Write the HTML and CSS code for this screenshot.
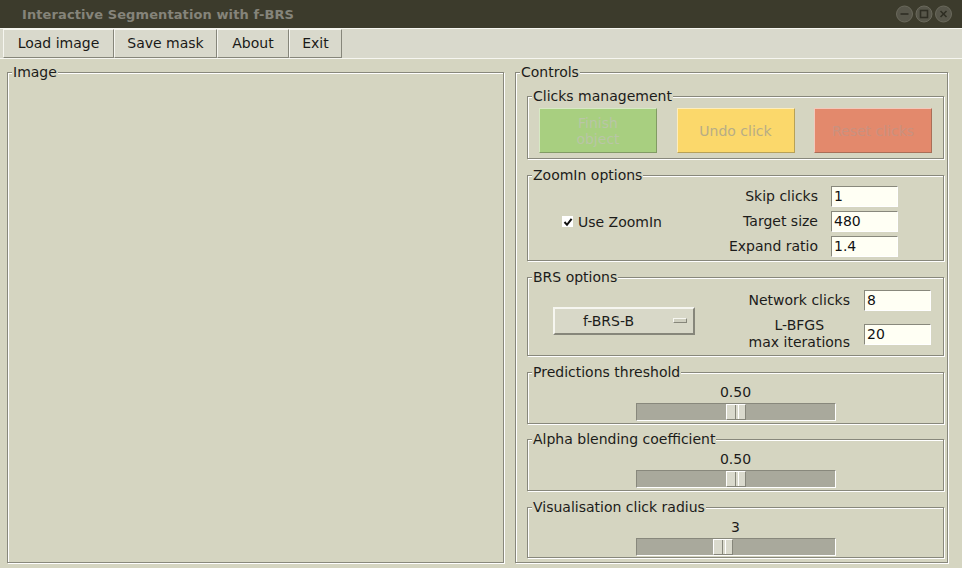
FILE: index.html
```html
<!DOCTYPE html>
<html>
<head>
<meta charset="utf-8">
<title>Interactive Segmentation with f-BRS</title>
<link rel="stylesheet" href="styles.css">
</head>
<body>
<div class="window">
  <div class="titlebar">
    <span class="title">Interactive Segmentation with f-BRS</span>
    <svg class="wm-buttons" width="57" height="18" viewBox="0 0 57 18">
      <g fill="#57564a" stroke="#6a695c" stroke-width="1">
        <circle cx="8.5" cy="9" r="8"/>
        <circle cx="28" cy="9" r="8"/>
        <circle cx="47.5" cy="9" r="8"/>
      </g>
      <g stroke="#2f2e24" stroke-width="1.6" fill="none">
        <line x1="4.5" y1="9" x2="12.5" y2="9"/>
        <rect x="24.5" y="5.5" width="7" height="7"/>
        <line x1="44.5" y1="6" x2="50.5" y2="12"/>
        <line x1="50.5" y1="6" x2="44.5" y2="12"/>
      </g>
    </svg>
  </div>
  <div class="menubar">
    <div class="menu-btn w-load">Load image</div>
    <div class="menu-btn w-save">Save mask</div>
    <div class="menu-btn w-about">About</div>
    <div class="menu-btn w-exit">Exit</div>
  </div>
  <div class="main">
    <div class="group image-group">
      <span class="group-title">Image</span>
    </div>
    <div class="group controls-group">
      <span class="group-title controls-title">Controls</span>

      <div class="group clicks">
        <span class="group-title">Clicks management</span>
        <div class="clicks-row">
          <div class="cbtn cbtn-green">Finish<br>object</div>
          <div class="cbtn cbtn-yellow">Undo click</div>
          <div class="cbtn cbtn-red">Reset clicks</div>
        </div>
      </div>

      <div class="group zoomin">
        <span class="group-title">ZoomIn options</span>
        <div class="zoomin-body">
          <label class="check">
            <span class="checkbox">
              <svg width="10" height="10" viewBox="0 0 10 10"><path d="M1.5 5 L4 7.8 L8.6 1.8" stroke="#111" stroke-width="2" fill="none"/></svg>
            </span>
            Use ZoomIn
          </label>
          <div class="form-grid zoom-grid">
            <span class="lbl">Skip clicks</span><span class="entry">1</span>
            <span class="lbl">Target size</span><span class="entry">480</span>
            <span class="lbl">Expand ratio</span><span class="entry">1.4</span>
          </div>
        </div>
      </div>

      <div class="group brs">
        <span class="group-title">BRS options</span>
        <div class="brs-body">
          <div class="menubutton"><span>f-BRS-B</span><span class="indicator"></span></div>
          <div class="form-grid brs-grid">
            <span class="lbl">Network clicks</span><span class="entry">8</span>
            <span class="lbl lbl-center">L-BFGS<br>max iterations</span><span class="entry">20</span>
          </div>
        </div>
      </div>

      <div class="group slider-group">
        <span class="group-title">Predictions threshold</span>
        <div class="slider-value">0.50</div>
        <div class="trough"><div class="handle" style="left:89px"></div></div>
      </div>

      <div class="group slider-group alpha">
        <span class="group-title">Alpha blending coefficient</span>
        <div class="slider-value">0.50</div>
        <div class="trough"><div class="handle" style="left:89px"></div></div>
      </div>

      <div class="group slider-group radius">
        <span class="group-title">Visualisation click radius</span>
        <div class="slider-value">3</div>
        <div class="trough"><div class="handle" style="left:76px"></div></div>
      </div>
    </div>
  </div>
</div>
</body>
</html>
```

FILE: styles.css
```css
* { box-sizing: border-box; }

html, body {
  margin: 0;
  padding: 0;
}

body {
  font-family: "DejaVu Sans", "Liberation Sans", sans-serif;
  font-size: 14px;
  color: #1c1c1a;
  background: #d5d5c1;
}

.window {
  width: 962px;
  height: 568px;
  display: flex;
  flex-direction: column;
  overflow: hidden;
}

/* title bar */
.titlebar {
  height: 28px;
  flex: none;
  background: #3c3b2c;
  display: flex;
  align-items: center;
  padding: 0 9px 0 22px;
}

.title {
  flex: 1;
  color: #85847a;
  font-size: 13px;
  font-weight: bold;
  letter-spacing: 0.1px;
}

.wm-buttons { display: block; }

/* menu bar */
.menubar {
  height: 31px;
  flex: none;
  display: flex;
  padding-left: 3px;
  background: #d9d9cc;
  border-top: 1px solid #f6f6f0;
  border-bottom: 1px solid #f6f6f0;
}

.menu-btn {
  text-align: center;
  line-height: 27px;
  border: 1px solid;
  border-color: #f6f6f0 #86867a #86867a #f6f6f0;
  color: #1a1a18;
}

.w-load { width: 111px; }
.w-save { width: 103px; }
.w-about { width: 72px; }
.w-exit { width: 53px; }

/* main area */
.main {
  flex: 1;
  display: flex;
  gap: 11px;
  padding: 13px 0 6px 7px;
}

.group {
  border: 1px solid #88887c;
  box-shadow: inset 1px 1px 0 #ffffff, 1px 1px 0 #ffffff;
}

.group-title {
  display: block;
  width: max-content;
  height: 17px;
  line-height: 17px;
  margin: -9px 0 0 4px;
  padding: 0 1px;
  background: #d5d5c1;
  color: #1c1c1a;
}

.image-group {
  width: 497px;
  height: 491px;
}

.controls-group {
  width: 433px;
  height: 491px;
  padding: 0 3px 0 11px;
  display: flex;
  flex-direction: column;
}

.controls-title { margin-left: -7px; }

/* clicks management */
.clicks {
  height: 63px;
  margin-top: 15px;
}

.clicks-row {
  display: flex;
  justify-content: space-between;
  padding: 3px 11px 0 11px;
}

.cbtn {
  width: 118px;
  height: 45px;
  display: flex;
  align-items: center;
  justify-content: center;
  text-align: center;
  line-height: 16px;
  border: 1px solid;
  border-color: rgba(255,255,255,0.55) rgba(60,60,50,0.35) rgba(60,60,50,0.35) rgba(255,255,255,0.55);
}

.cbtn-green { background: #a8cf80; color: #b9c6a6; }
.cbtn-yellow { background: #fbd86b; color: #b7ad86; }
.cbtn-red { background: #e3896c; color: #c9917f; }

/* zoomin */
.zoomin {
  height: 86px;
  margin-top: 16px;
}

.zoomin-body {
  display: flex;
  align-items: center;
  padding: 2px 45px 0 34px;
}

.check {
  display: flex;
  align-items: center;
  gap: 5px;
}

.checkbox {
  width: 11px;
  height: 11px;
  background: #ffffff;
  display: flex;
  align-items: center;
  justify-content: center;
}

.checkbox svg { display: block; }

.form-grid {
  margin-left: auto;
  display: grid;
  grid-template-columns: auto 67px;
  column-gap: 13px;
  align-items: center;
}

.zoom-grid { row-gap: 4px; }

.lbl {
  text-align: right;
  justify-self: end;
  line-height: 21px;
}

.lbl-center {
  text-align: center;
  line-height: 17px;
}

.entry {
  height: 21px;
  width: 67px;
  background: #fffff4;
  border: 1px solid;
  border-color: #88887c #ffffff #ffffff #88887c;
  padding-left: 2px;
  line-height: 19px;
  color: #111;
}

/* brs */
.brs {
  height: 79px;
  margin-top: 16px;
}

.brs-body {
  display: flex;
  align-items: center;
  padding: 4px 12px 0 25px;
}

.brs-grid {
  row-gap: 6px;
  column-gap: 14px;
}

.menubutton {
  width: 142px;
  height: 28px;
  display: flex;
  align-items: center;
  padding: 0 6px 0 28px;
  border: 2px solid;
  border-color: #f6f6f0 #86867a #86867a #f6f6f0;
  background: #d8d8c8;
}

.indicator {
  margin-left: auto;
  width: 14px;
  height: 5px;
  border: 1px solid;
  border-color: #f6f6f0 #86867a #86867a #f6f6f0;
  background: #cfcfc0;
}

/* sliders */
.slider-group {
  height: 52px;
  margin-top: 16px;
  display: flex;
  flex-direction: column;
  align-items: center;
}

.slider-group .group-title { align-self: flex-start; }

.alpha { margin-top: 15px; }
.radius { height: 51px; margin-top: 16px; }

.slider-value {
  height: 17px;
  line-height: 17px;
  margin-top: 3px;
}

.trough {
  position: relative;
  width: 200px;
  height: 18px;
  margin-top: 2px;
  background: #a9a99c;
  border: 1px solid;
  border-color: #88887c #ffffff #ffffff #88887c;
}

.handle {
  position: absolute;
  top: 0;
  width: 20px;
  height: 16px;
  background: #dadacd;
  border: 1px solid;
  border-color: #ffffff #86867a #86867a #ffffff;
}

.handle::after {
  content: "";
  position: absolute;
  left: 8px;
  top: 0;
  width: 2px;
  height: 14px;
  border-left: 1px solid #86867a;
  border-right: 1px solid #ffffff;
}
```
